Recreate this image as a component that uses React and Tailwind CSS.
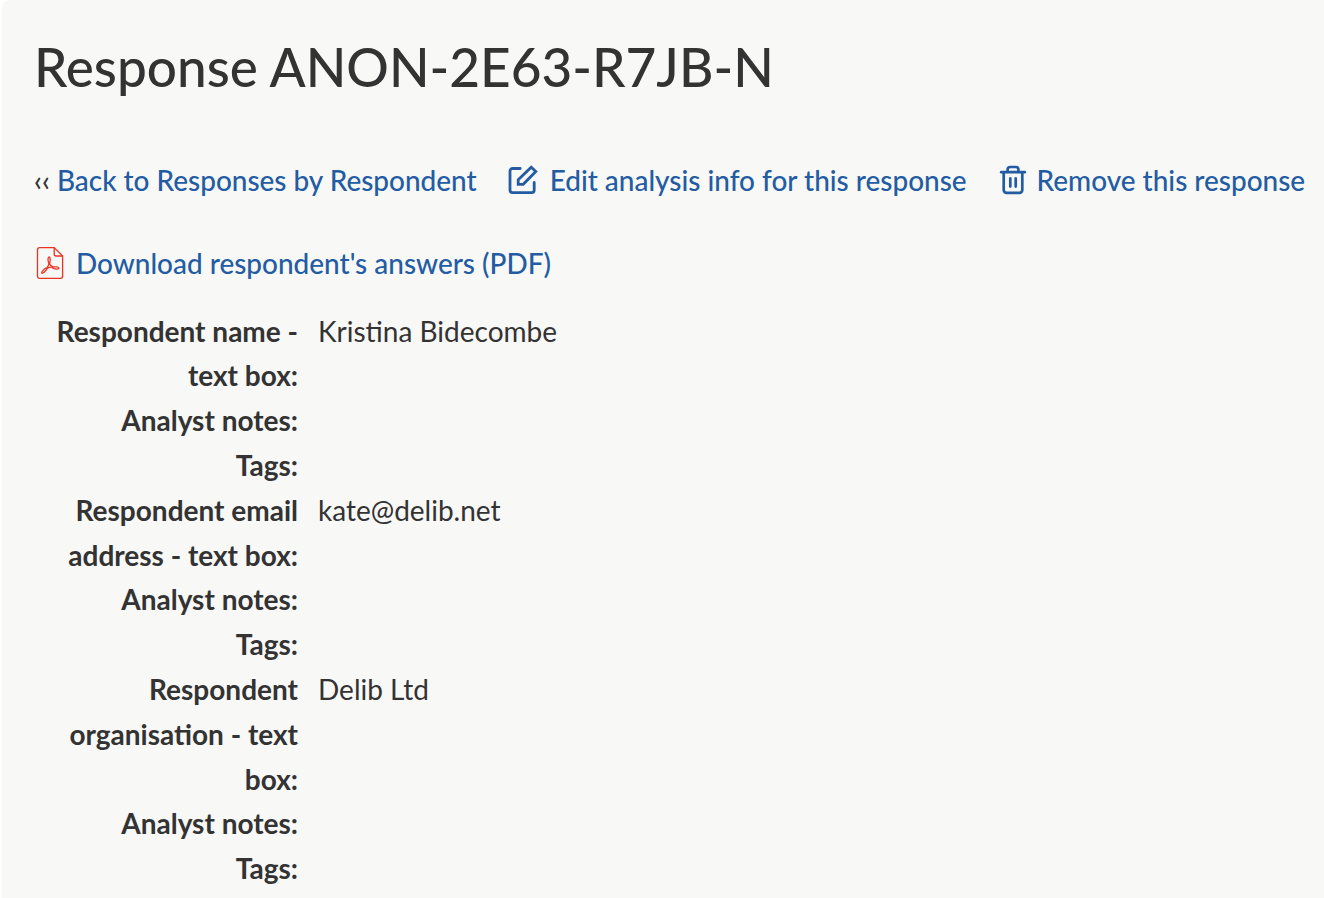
const respondentFields = [
    { label: "Respondent name - text box:", value: "Kristina Bidecombe" },
    { label: "Respondent email address - text box:", value: "kate@delib.net" },
    { label: "Respondent organisation - text box:", value: "Delib Ltd" },
];

function EditIcon() {
    return (
        <svg
            width="32"
            height="32"
            viewBox="0 0 32 32"
            fill="none"
            stroke="currentColor"
            strokeWidth="2.8"
            strokeLinejoin="round"
        >
            <path
                d="M13.2 4.5H5.6A2.6 2.6 0 0 0 3 7.1V26A2.6 2.6 0 0 0 5.6 28.6H24.6A2.6 2.6 0 0 0 27.2 26V18.4"
                strokeLinecap="round"
            />
            <path d="M11.2 15.8L24.2 3.2L28.8 7.6L16.2 20.3H11.2Z" strokeLinejoin="miter" />
        </svg>
    );
}

function TrashIcon() {
    return (
        <svg
            width="28"
            height="32"
            viewBox="0 0 28 32"
            fill="none"
            stroke="currentColor"
            strokeWidth="2.7"
            strokeLinecap="round"
        >
            <path d="M2.2 8.2H25.8" />
            <path d="M8.6 8V5.6A2.6 2.6 0 0 1 11.2 3H16.8A2.6 2.6 0 0 1 19.4 5.6V8" />
            <path d="M4.7 8.5V26A2.8 2.8 0 0 0 7.5 28.8H20.5A2.8 2.8 0 0 0 23.3 26V8.5" />
            <path d="M11.3 14.4V22.6M16.7 14.4V22.6" />
        </svg>
    );
}

function PdfIcon() {
    return (
        <svg
            width="28"
            height="34"
            viewBox="0 0 28 34"
            fill="none"
            stroke="#ea3323"
            strokeWidth="1.3"
            strokeLinejoin="round"
        >
            <path d="M3.5 1.6H18.2L26.6 10V30.3A2 2 0 0 1 24.6 32.3H3.5A2 2 0 0 1 1.5 30.3V3.6A2 2 0 0 1 3.5 1.6Z" />
            <path d="M18.2 1.6V8A2 2 0 0 0 20.2 10H26.6" />
            {/* Three loops around a small triangle */}
            <path d="M12.8 17.4C11.6 14.4 11.8 11 13.2 11C14.6 11 14.4 14.6 13.6 17.6" />
            <path d="M10.4 21.8C7.6 23.4 5.2 26 5.8 27C6.8 28 9.8 25.2 11.2 22.2" />
            <path d="M16 21.8C18.8 23.3 22.8 23.5 23 22.2C23 20.9 19.4 20.6 16.4 20.9" />
            <path d="M13.2 17.2C12.8 19 11.8 20.8 10.8 22.4C12.6 21.5 14.6 21 16.8 20.9C15.2 20 13.8 18.8 13.2 17.2Z" />
        </svg>
    );
}

export default function App() {
    return (
        <div className="h-[898px] overflow-hidden bg-white pl-0.5 font-[Lato,sans-serif] text-[28px] leading-[44.8px] text-[#333333]">
            <main className="h-full rounded-tl-lg bg-[#f8f8f6] pl-8 pt-[35px]">
                <h1 className="text-[53.1px] font-medium leading-[64px] whitespace-nowrap">
                    Response ANON-2E63-R7JB-N
                </h1>

                {/* Response actions */}
                <nav className="mt-[59px] flex whitespace-nowrap text-[27.94px] font-medium text-[#235ca3]">
                    <div>
                        <span className="text-[#333333]">‹‹ </span>
                        <a href="#">Back to Responses by Respondent</a>
                    </div>
                    <a href="#" className="ml-[30px] flex">
                        <span className="mr-[11px] pt-[6px]">
                            <EditIcon />
                        </span>
                        Edit analysis info for this response
                    </a>
                    <a href="#" className="ml-8 flex">
                        <span className="mr-[10px] pt-[6px]">
                            <TrashIcon />
                        </span>
                        Remove this response
                    </a>
                </nav>

                <a
                    href="#"
                    className="mt-[38px] flex text-[27.94px] font-medium text-[#235ca3]"
                >
                    <span className="ml-0.5 mr-3 pt-[5px]">
                        <PdfIcon />
                    </span>
                    Download respondent's answers (PDF)
                </a>

                {/* Respondent details */}
                <dl className="mt-[23px]">
                    {respondentFields.map((field) => (
                        <div key={field.label}>
                            <div className="flex gap-5">
                                <dt className="w-[264px] shrink-0 text-right font-bold">
                                    {field.label}
                                </dt>
                                <dd>{field.value}</dd>
                            </div>
                            <dt className="w-[264px] text-right font-bold">
                                Analyst notes:
                            </dt>
                            <dt className="w-[264px] text-right font-bold">
                                Tags:
                            </dt>
                        </div>
                    ))}
                </dl>
            </main>
        </div>
    );
}
